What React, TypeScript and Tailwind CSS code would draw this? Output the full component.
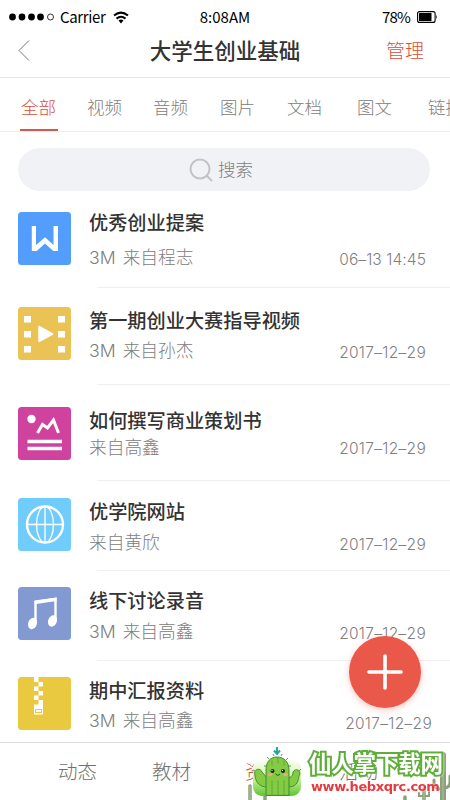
import type { ReactNode } from "react";
import { clsx } from "clsx";

const CATEGORIES = [
  { label: "全部", left: "ml-[21px]" },
  { label: "视频", left: "ml-[30px]" },
  { label: "音频", left: "ml-[30px]" },
  { label: "图片", left: "ml-[31px]" },
  { label: "文档", left: "ml-[31px]" },
  { label: "图文", left: "ml-[34px]" },
  { label: "链接", left: "ml-[35px]" },
];

function Tile({ color, children }: { color: string; children: ReactNode }) {
  return (
    <svg viewBox="0 0 53 53" className="block h-[53px] w-[53px]">
      <rect width="53" height="53" rx="3.500" fill={color} />
      {children}
    </svg>
  );
}

function WordIcon() {
  return (
    <Tile color="#539dfc">
      <path d="M13.800 14H18V33L27 25.300L35.500 33V14H40V39H35.300L27 31.500L18.700 39H13.800Z" fill="#fff" />
    </Tile>
  );
}

function VideoIcon() {
  return (
    <Tile color="#ebc354">
      {[9, 24, 39].map((y) => (
        <g key={y} fill="#fff">
          <rect x="6" y={y} width="7" height="6.5" />
          <rect x="40" y={y} width="7" height="6.5" />
        </g>
      ))}
      <path d="M21 19.500L34.500 27L21 34.500Z" fill="#fff" stroke="#fff" strokeWidth="1.500" strokeLinejoin="round" />
    </Tile>
  );
}

function ImageTextIcon() {
  return (
    <Tile color="#cf429e">
      <circle cx="13.500" cy="12" r="4.200" fill="#fff" />
      <path d="M19.500 26L24.500 17.500L29.500 21L35.500 13L40.500 26" fill="none" stroke="#fff" strokeWidth="3" />
      <path d="M9.500 34.500H44M9.500 41.500H44" stroke="#fff" strokeWidth="3.400" />
    </Tile>
  );
}

function WebIcon() {
  return (
    <Tile color="#70cdfb">
      <g fill="none" stroke="#fff">
        <circle cx="27" cy="26.500" r="18" strokeWidth="2.400" />
        <path d="M9 26.500H45M27 8.500V44.500" strokeWidth="1.300" />
        <ellipse cx="27" cy="26.500" rx="8.500" ry="18" strokeWidth="1.300" />
      </g>
    </Tile>
  );
}

function MusicIcon() {
  return (
    <Tile color="#8299d1">
      <path d="M17.500 36V15L37.500 12V34" fill="none" stroke="#fff" strokeWidth="2.400" />
      <path d="M16.500 13.500L38.500 10.500V14L16.500 17.200Z" fill="#fff" />
      <ellipse cx="14.500" cy="36.500" rx="4.400" ry="5.800" transform="rotate(18 14.500 36.500)" fill="#fff" />
      <ellipse cx="34.500" cy="34" rx="4.400" ry="5.800" transform="rotate(18 34.500 34)" fill="#fff" />
    </Tile>
  );
}

function ZipIcon() {
  return (
    <Tile color="#e8c93f">
      <g fill="#fff">
        <rect x="16" width="4.500" height="5" />
        <rect x="20.500" y="5" width="4.500" height="4.500" />
        <rect x="16" y="9.500" width="4.500" height="4.500" />
        <rect x="20.500" y="14" width="4.500" height="4.500" />
        <rect x="16" y="18.500" width="4.500" height="4.500" />
        <rect x="20.500" y="23" width="4.500" height="5" />
        <rect x="16" y="27.500" width="9" height="10" />
      </g>
      <rect x="17.500" y="32.500" width="6" height="3" fill="none" stroke="#e8c93f" strokeWidth="1" />
    </Tile>
  );
}

const FILES = [
  {
    title: "优秀创业提案", size: "3M", from: "来自程志", date: "06–13 14:45", icon: <WordIcon />,
    row: "h-[97px]", iconTop: "mt-[21px]", titleTop: "mt-[19px]", fromTop: "mt-2.5", dateTop: "mt-[57px] tracking-[0.1px]",
  },
  {
    title: "第一期创业大赛指导视频", size: "3M", from: "来自孙杰", date: "2017–12–29", icon: <VideoIcon />,
    row: "h-[97px]", iconTop: "mt-[19px]", titleTop: "mt-[20px]", fromTop: "mt-[5px]", dateTop: "mt-[53px] tracking-[0.3px]",
  },
  {
    title: "如何撰写商业策划书", size: "", from: "来自高鑫", date: "2017–12–29", icon: <ImageTextIcon />,
    row: "h-24", iconTop: "mt-[22px]", titleTop: "mt-[23px]", fromTop: "mt-[2px]", dateTop: "mt-[52px] tracking-[0.3px]",
  },
  {
    title: "优学院网站", size: "", from: "来自黄欣", date: "2017–12–29", icon: <WebIcon />,
    row: "h-[90px]", iconTop: "mt-[17px]", titleTop: "mt-[18px]", fromTop: "mt-[6px]", dateTop: "mt-[52px] tracking-[0.3px]",
  },
  {
    title: "线下讨论录音", size: "3M", from: "来自高鑫", date: "2017–12–29", icon: <MusicIcon />,
    row: "h-[90px]", iconTop: "mt-[16px]", titleTop: "mt-[17px]", fromTop: "mt-1.5", dateTop: "mt-[51px] tracking-[0.3px]",
  },
  {
    title: "期中汇报资料", size: "3M", from: "来自高鑫", date: "2017–12–29", icon: <ZipIcon />,
    row: "h-[81px]", iconTop: "mt-[16px]", titleTop: "mt-[17px]", fromTop: "mt-[5px]", dateTop: "mt-[51px] tracking-[0.3px]",
  },
];

function StatusBar() {
  return (
    <div className="grid h-[34px] grid-cols-3 items-center text-[15px] text-black">
      <div className="flex items-center pl-[9px]">
        <svg viewBox="0 0 46 8" className="h-2 w-[46px]">
          {[3.5, 13, 22.5, 31.5].map((x) => (
            <circle key={x} cx={x} cy="4" r="3.400" />
          ))}
          <circle cx="41.500" cy="4" r="3" fill="none" stroke="#000" strokeWidth="0.800" />
        </svg>
        <span className="ml-[5px] w-[46px] whitespace-nowrap tracking-[-0.35px]">Carrier</span>
        <svg viewBox="0 0 16 13" className="ml-[7px] h-[13px] w-4" fill="none" stroke="#000" strokeWidth="2">
          <path d="M1 4.500Q8 -1.200 15 4.500M3.500 7.600Q8 4 12.500 7.600" />
          <path d="M5.500 9.500Q8 7.700 10.500 9.500L8 12.500Z" fill="#000" stroke="none" />
        </svg>
      </div>
      <span className="text-center">8:08AM</span>
      <div className="flex items-center justify-end pr-3">
        <span className="tracking-[-0.8px]">78%</span>
        <svg viewBox="0 0 21 12" className="ml-[7px] h-3 w-[21px]">
          <rect x="0.600" y="0.600" width="17.500" height="10.800" rx="2" fill="none" stroke="#000" strokeWidth="1.100" />
          <rect x="2" y="2" width="12.500" height="8" rx="0.500" />
          <path d="M19 3.500Q20.500 6 19 8.500Z" />
        </svg>
      </div>
    </div>
  );
}

function Cactus({ className }: { className: string }) {
  return (
    <svg viewBox="0 0 50 50" className={className}>
      <defs>
        <linearGradient id="ground" x1="0" y1="0" x2="0" y2="1">
          <stop offset="0" stopColor="#fdfffb" />
          <stop offset="0.500" stopColor="#d3f3a4" />
          <stop offset="1" stopColor="#5bc62c" />
        </linearGradient>
      </defs>
      <rect x="1" y="12" width="48" height="37" rx="9" fill="url(#ground)" />
      <path d="M25 0V6M22 3.500L25 7L28 3.500" fill="none" stroke="#22aaa0" strokeWidth="2" />
      <g stroke="#39832b" strokeWidth="0.900" strokeLinecap="round" strokeLinejoin="round" fill="#83cb43">
        <path d="M15 40C8 40 4 36 3 29C1 22 8 20 10 25L15 31M36 31C40 30 41 28 41 25C44 20 50 24 47 29C46 37 43 40 36 40" />
        <path d="M14 48V23C14 15 18 10 25 10C32 10 37 15 37 23V48Z" />
        <path d="M20 14V18M20 34V48M26 11V17M26 34V48M32 14V18M32 34V48" stroke="#559d30" strokeWidth="0.800" strokeDasharray="2 1" fill="none" />
      </g>
      <path d="M17 12L15 10M22 9L21 7M29 9L30 7M34 13L36 11M37 19H39M12 19H14M3 24L1 23M47 24L49 22" stroke="#39832b" strokeWidth="0.800" />
      <circle cx="20.500" cy="24" r="2" fill="#202d18" />
      <circle cx="31" cy="24" r="2" fill="#202d18" />
      <circle cx="20" cy="23.300" r="0.600" fill="#fff" />
      <circle cx="30.500" cy="23.300" r="0.600" fill="#fff" />
      <ellipse cx="18" cy="27.500" rx="2.500" ry="1.600" fill="#f5a08a" />
      <ellipse cx="33.500" cy="27.500" rx="2.500" ry="1.600" fill="#f5a08a" />
      <path d="M23.500 27Q26 30 28 27" fill="none" stroke="#30551f" />
    </svg>
  );
}

// Site badge laid over the bottom tabs.
function SiteBadge() {
  return (
    <div className="absolute bottom-0 right-0 h-[57px] w-[205px] overflow-hidden">
      <svg viewBox="0 0 205 57" className="absolute inset-0 h-full w-full">
        <rect x="9" y="10" width="48" height="36" rx="6" fill="#fff" />
        <g fill="none" stroke="#8ba17a" strokeLinecap="round">
          <path d="M198 12V57" strokeWidth="6" />
          <path d="M189 37V41Q189 46 197 46M205 33V39Q205 45 198 45" strokeWidth="3" />
          <path d="M179 46V57M160 54V57M5 43V57M20 50V57" strokeWidth="3.500" />
          <path d="M174 50V53H184V49" strokeWidth="2" />
        </g>
        <path d="M198 12V57M179 45V57M5 43V57" stroke="#b3c29e" strokeWidth="1" />
      </svg>
      <Cactus className="absolute left-[7px] top-[4px] h-[50px] w-[50px]" />
      <span className="absolute left-[64px] top-[4px] whitespace-nowrap text-[22.5px] font-bold leading-[30px] tracking-[-0.2px] text-white drop-shadow-[0_0_1px_#fff] [-webkit-text-stroke:4px_#5fae3a] [paint-order:stroke_fill]">
        仙人掌下载网
      </span>
      <span className="absolute left-[66px] top-[35px] whitespace-nowrap font-['DejaVu_Sans',sans-serif] text-[13px] font-bold leading-[17px] tracking-[-0.4px] text-[#e73940] drop-shadow-[0_0_1px_#fff]">
        www.hebxqrc.com
      </span>
    </div>
  );
}

export default function App() {
  return (
    <div className="relative flex h-[800px] w-[450px] flex-col overflow-hidden bg-white font-['Noto_Sans_CJK_SC',sans-serif]">
      <StatusBar />
      <header className="grid h-11 grid-cols-[100px_1fr_100px] items-center border-b border-[#e4e4e4] pb-[11px]">
        <svg viewBox="0 0 12 21" className="ml-[18px] mt-px h-[21px] w-3" fill="none" stroke="#777" strokeWidth="1">
          <path d="M11 0.500L1 10.500L11 20.500" />
        </svg>
        <h1 className="-mt-px whitespace-nowrap text-center text-[21.5px] font-medium leading-[30px] text-[#333]">大学生创业基础</h1>
        <span className="mt-px pl-9 text-[19px] font-light text-[#d5513e]">管理</span>
      </header>

      <nav className="flex h-[54px] shrink-0 overflow-hidden border-b border-[#eee] text-[17.5px] font-light">
        {CATEGORIES.map((item, i) => (
          <span
            key={item.label}
            className={clsx(
              "relative h-[53px] w-9 shrink-0 whitespace-nowrap pt-[13px] leading-8",
              item.left,
              i === 0 ? "text-[#d5513e]" : "text-[#808080]"
            )}
          >
            {item.label}
            {i === 0 && <span className="absolute -left-px bottom-0 h-[2px] w-[38px] bg-[#cf5a4e]" />}
          </span>
        ))}
      </nav>

      <div className="ml-[18px] mr-5 mt-4 flex h-[43px] shrink-0 items-center rounded-full bg-[#f0f2f5] pl-[171px] text-[17.5px] font-light text-[#808080]">
        <svg viewBox="0 0 24 24" className="mr-[5px] h-6 w-6" fill="none" stroke="#c2c3c5" strokeWidth="2">
          <circle cx="11" cy="11" r="9.500" />
          <path d="M17.500 17.500L23 23" />
        </svg>
        搜索
      </div>

      <main className="shrink-0">
        {FILES.map((file, i) => (
          <div key={file.title} className={clsx("relative flex pl-[18px]", file.row)}>
            <div className={file.iconTop}>{file.icon}</div>
            <div className="ml-[18px] min-w-0 flex-1 whitespace-nowrap">
              <p className={clsx("text-[19.2px] font-medium leading-6 text-[#333]", file.titleTop)}>{file.title}</p>
              <p className={clsx("text-[17.7px] font-light leading-6 text-[#808080]", file.fromTop)}>
                {file.size && <span className="mr-[7px] font-['Inter',sans-serif]">{file.size}</span>}
                {file.from}
              </p>
            </div>
            <time
              className={clsx(
                "shrink-0 font-['Inter',sans-serif] text-[15.5px] font-light leading-6 text-[#808080]",
                i === FILES.length - 1 ? "mr-[18px]" : "mr-6",
                file.dateTop
              )}
            >
              {file.date}
            </time>
            {i < FILES.length - 1 && <span className="absolute bottom-0 left-[97px] right-0 h-px bg-[#f0f0f0]" />}
          </div>
        ))}
      </main>

      <footer className="flex h-[58px] shrink-0 border-t border-[#ddd] pl-[58px] pt-[12px] text-[19.5px] font-light leading-8 text-[#707070]">
        <span className="w-[94px]">动态</span>
        <span className="w-[93px]">教材</span>
        <span className="w-[94px] text-[#d5513e]">资料</span>
        <span>活动</span>
      </footer>

      <button
        type="button"
        aria-label="添加"
        className="absolute bottom-[92px] right-[29px] flex h-[72px] w-[72px] items-center justify-center rounded-full bg-[#e95848] shadow-[0_2px_6px_rgba(233,88,72,0.35)]"
      >
        <svg viewBox="0 0 36 36" className="h-9 w-9" stroke="#fff" strokeWidth="3.600" strokeLinecap="round">
          <path d="M2 18H34M18 2V34" />
        </svg>
      </button>
      <SiteBadge />
    </div>
  );
}
